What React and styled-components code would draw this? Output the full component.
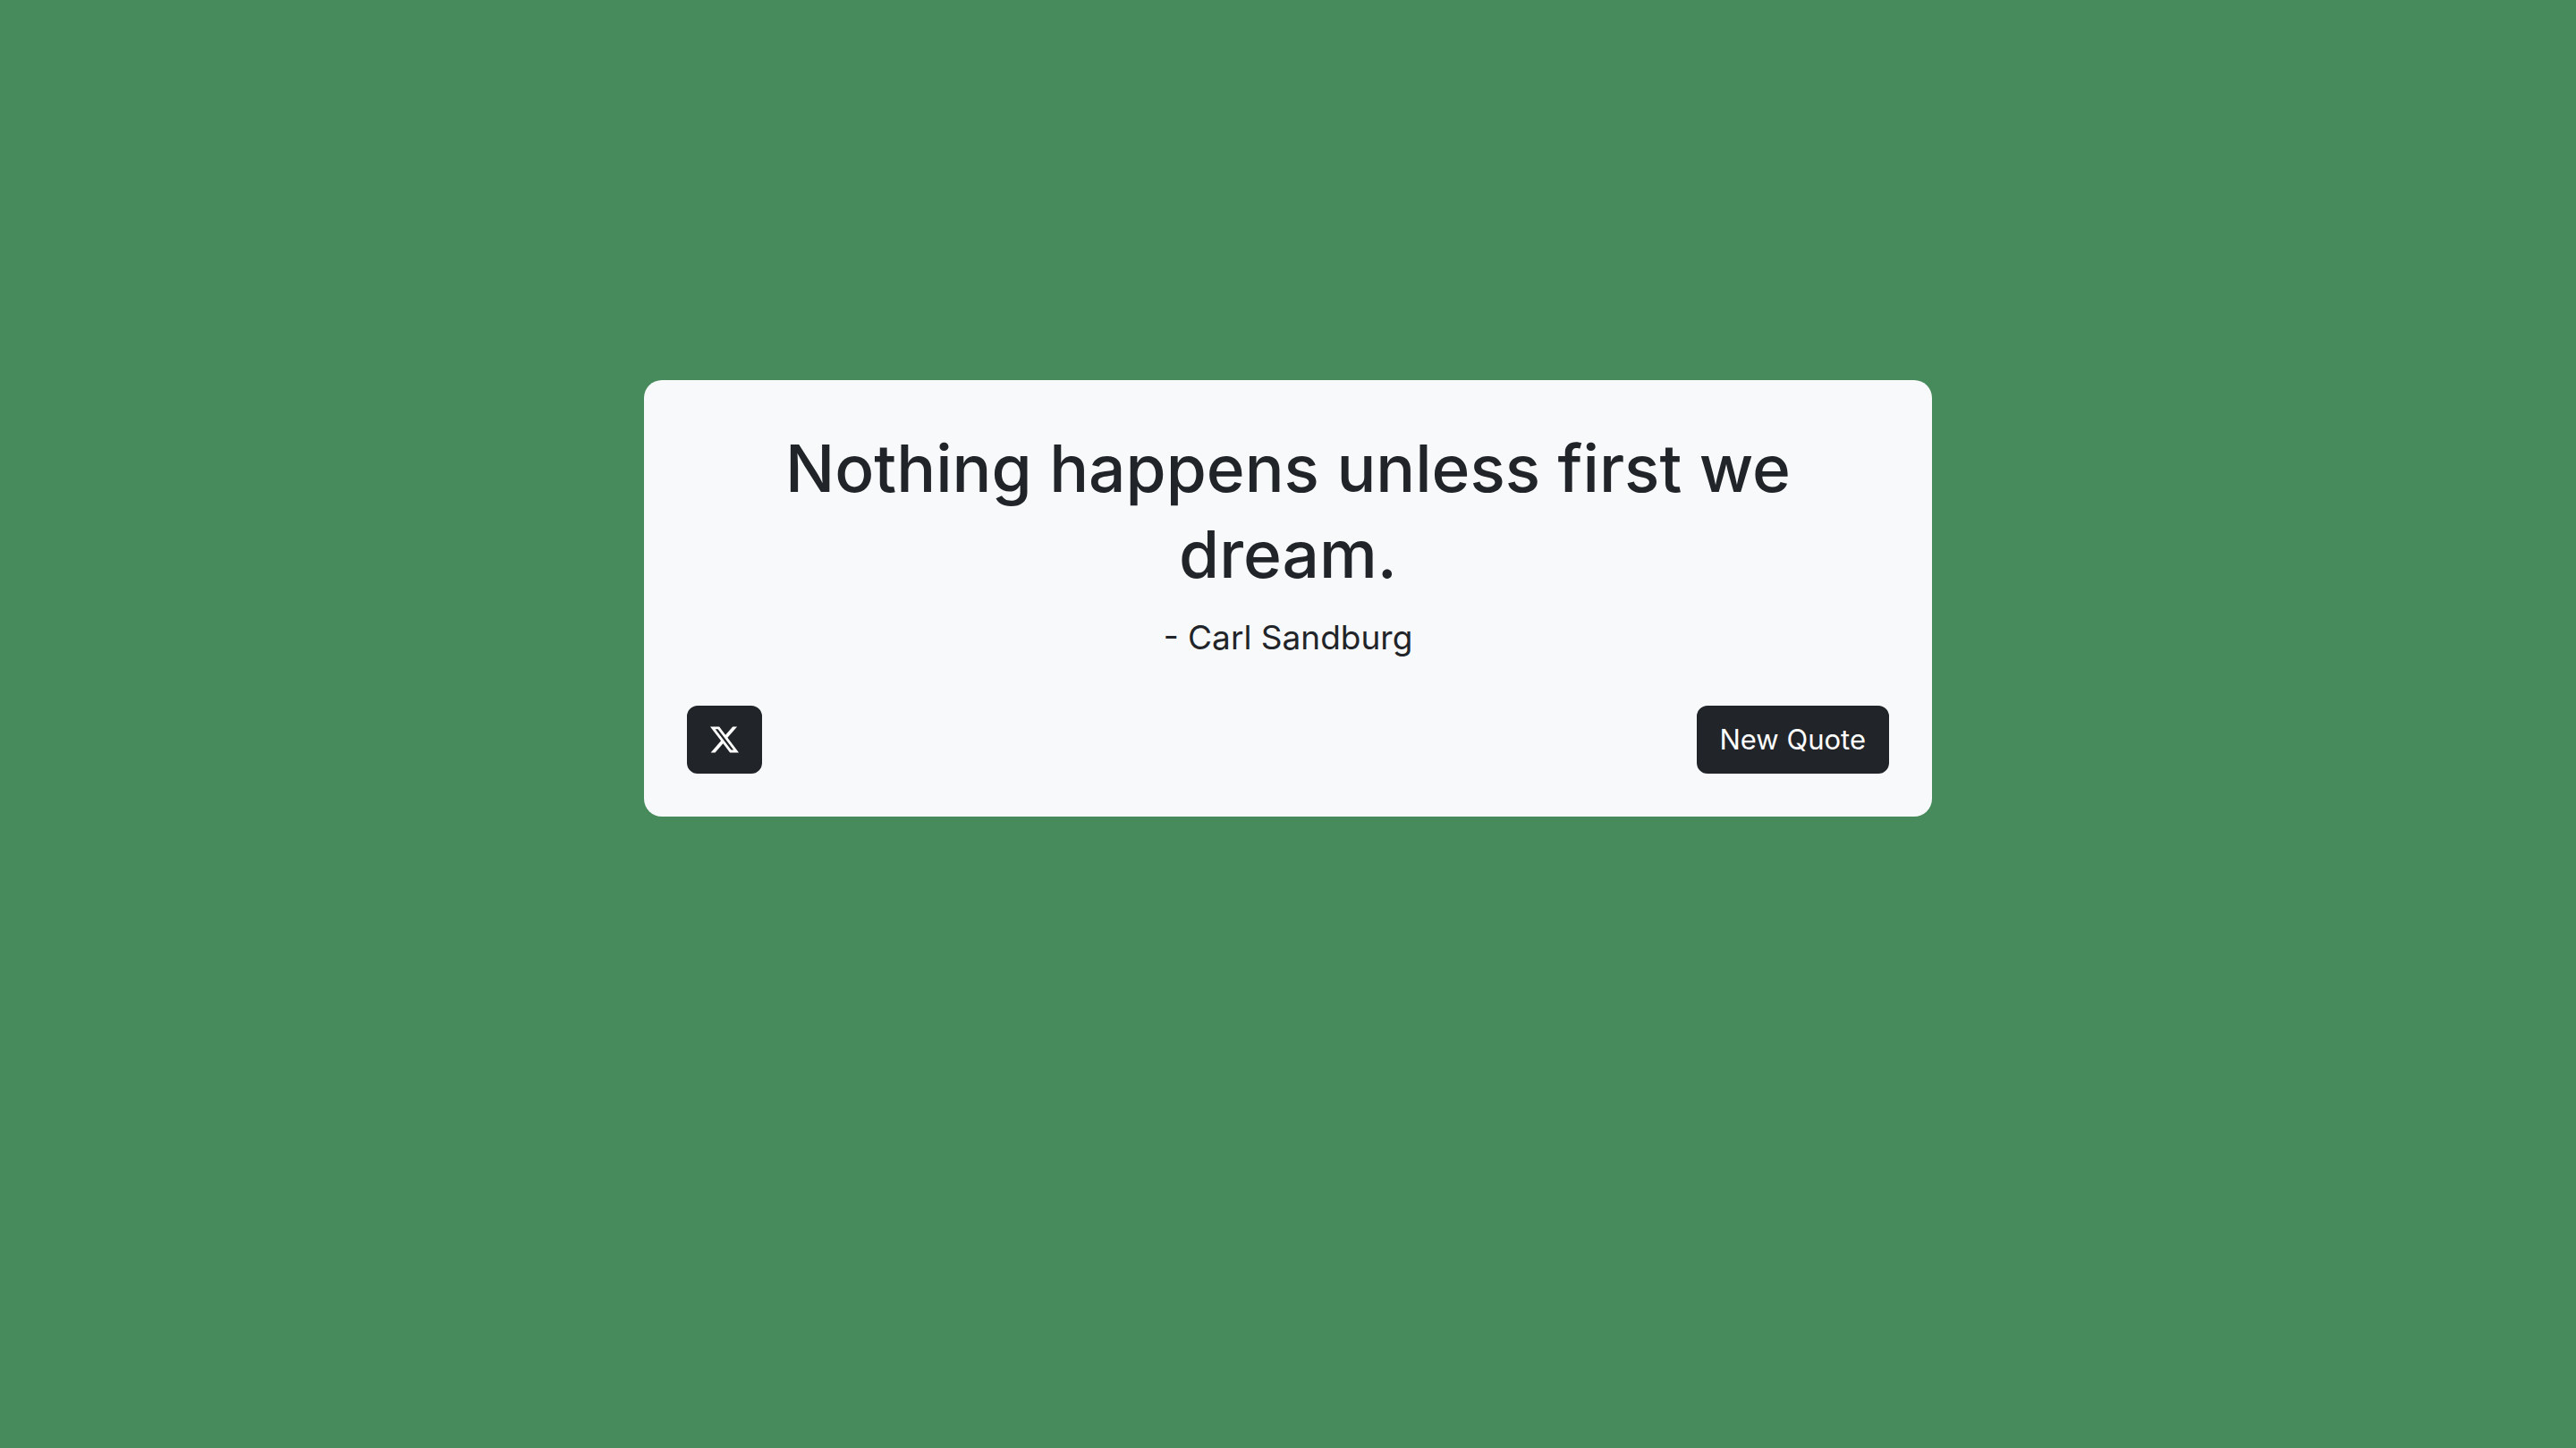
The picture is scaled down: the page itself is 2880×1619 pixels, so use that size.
import React from "react";
import styled, { createGlobalStyle } from "styled-components";
import { BsTwitterX } from "react-icons/bs";

const GlobalStyle = createGlobalStyle`
  *, *::before, *::after {
    box-sizing: border-box;
  }
  body {
    margin: 0;
    background: #478a5b;
    color: #212529;
    font-family: Inter, "Liberation Sans", sans-serif;
  }
`;

const Page = styled.main`
  display: flex;
  justify-content: center;
  align-items: flex-start;
  min-height: 100vh;
  padding-top: 425px;
`;

const QuoteBox = styled.section`
  display: flex;
  flex-direction: column;
  width: 50%;
  padding: 51px 48px 48px;
  border-radius: 20px;
  background: #f8f9fb;
`;

const QuoteText = styled.h1`
  margin: 0 0 15px;
  padding: 0 96px;
  font-size: 73px;
  font-weight: 500;
  line-height: 96px;
  text-align: center;
`;

const Author = styled.p`
  margin: 0 0 46px;
  font-size: 37px;
  line-height: 60px;
  text-align: center;
`;

const Actions = styled.div`
  display: flex;
  justify-content: space-between;
  align-items: center;
`;

const buttonStyle = `
  display: inline-flex;
  align-items: center;
  justify-content: center;
  height: 76px;
  padding: 0 24px;
  border: 2px solid #212529;
  border-radius: 12px;
  background: #212529;
  color: #fff;
  font-family: inherit;
  font-size: 31px;
  line-height: 48px;
  text-decoration: none;
  cursor: pointer;
`;

const ShareLink = styled.a`
  ${buttonStyle}
  svg {
    width: 32px;
    height: 32px;
  }
`;

const NewQuoteButton = styled.button`
  ${buttonStyle}
`;

export default function App() {
  return (
    <>
      <GlobalStyle />
      <Page>
        <QuoteBox>
          <QuoteText>Nothing happens unless first we dream.</QuoteText>
          <Author>- Carl Sandburg</Author>
          <Actions>
            <ShareLink href="#share" aria-label="Share on X">
              <BsTwitterX aria-hidden="true" />
            </ShareLink>
            <NewQuoteButton type="button">New Quote</NewQuoteButton>
          </Actions>
        </QuoteBox>
      </Page>
    </>
  );
}
